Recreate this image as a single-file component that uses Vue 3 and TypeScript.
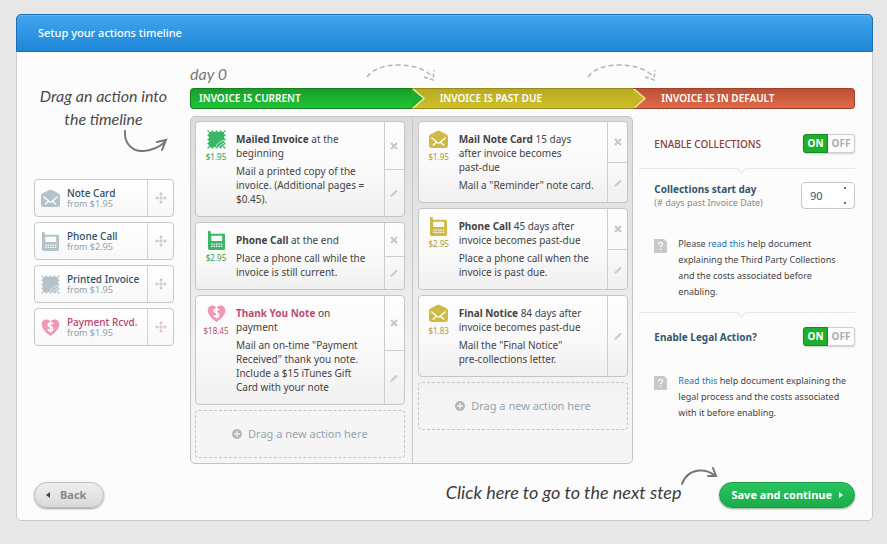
<script setup lang="ts">
import { ref } from 'vue'

type Tone = 'green' | 'gold' | 'pink' | 'slate'

interface PaletteItem {
  icon: string
  title: string
  price: string
  tone: Tone
}

interface TimelineCard {
  icon: string
  tone: Tone
  price: string
  name: string
  when: string
  text: string
  removable: boolean
}

const palette: PaletteItem[] = [
  { icon: 'mail', title: 'Note Card', price: 'from $1.95', tone: 'slate' },
  { icon: 'phone', title: 'Phone Call', price: 'from $2.95', tone: 'slate' },
  { icon: 'stamp', title: 'Printed Invoice', price: 'from $1.95', tone: 'slate' },
  { icon: 'heart', title: 'Payment Rcvd.', price: 'from $1.95', tone: 'pink' },
]

const columns: TimelineCard[][] = [
  [
    { icon: 'stamp', tone: 'green', price: '$1.95', name: 'Mailed Invoice', when: ' at the\nbeginning', text: 'Mail a printed copy of the\ninvoice. (Additional pages =\n$0.45).', removable: true },
    { icon: 'phone', tone: 'green', price: '$2.95', name: 'Phone Call', when: ' at the end', text: 'Place a phone call while the\ninvoice is still current.', removable: true },
    { icon: 'heart', tone: 'pink', price: '$18.45', name: 'Thank You Note', when: ' on\npayment', text: 'Mail an on-time "Payment\nReceived" thank you note.\nInclude a $15 iTunes Gift\nCard with your note', removable: true },
  ],
  [
    { icon: 'mail', tone: 'gold', price: '$1.95', name: 'Mail Note Card', when: ' 15 days\nafter invoice becomes\npast-due', text: 'Mail a "Reminder" note card.', removable: true },
    { icon: 'phone', tone: 'gold', price: '$2.95', name: 'Phone Call', when: ' 45 days after\ninvoice becomes past-due', text: 'Place a phone call when the\ninvoice is past due.', removable: true },
    { icon: 'mail', tone: 'gold', price: '$1.83', name: 'Final Notice', when: ' 84 days after\ninvoice becomes past-due', text: 'Mail the "Final Notice"\npre-collections letter.', removable: false },
  ],
]

const collections = ref(true)
const legal = ref(true)
const startDay = ref(90)
</script>

<template>
  <svg class="sprite" aria-hidden="true">
    <symbol id="mail" viewBox="0 0 20 20">
      <path fill="currentColor" d="M8.600 1a3 3 0 0 1 2.800 0l6.800 3.500A3 3 0 0 1 20 7v9.400a2.600 2.600 0 0 1-2.600 2.600H2.600A2.600 2.600 0 0 1 0 16.400V7a3 3 0 0 1 1.800-2.500z" />
      <path fill="none" stroke="#fff" stroke-width="1.400" d="M2.500 8l6 5.200q1.500 1.300 3 0l6-5.200M4 16.300l4.300-3.600M16 16.300l-4.300-3.600" />
    </symbol>
    <symbol id="phone" viewBox="0 0 20 20">
      <path fill="currentColor" fill-rule="evenodd" d="M1.500 0h1.600q.9 0 .9.900V3h13.500q1.500 0 1.500 1.500v14q0 1.500-1.500 1.500h-15Q1 20 1 18.500V.5q0-.5.500-.5zM4.500 5.500v4.500q0 .5.500.5h10.500q.5 0 .5-.5V5.500q0-.5-.5-.5H5q-.5 0-.5.500z" />
      <path stroke="#fff" stroke-width="1.300" stroke-dasharray="1.500 1" d="M4.500 13.700h11.500M4.500 16.200h11.500" />
    </symbol>
    <symbol id="stamp" viewBox="0 0 20 20">
      <path fill="currentColor" d="M.5.500h1.400a1.500 1.600 0 0 0 3 0h1.400a1.500 1.600 0 0 0 3 0h1.400a1.500 1.600 0 0 0 3 0h1.400a1.500 1.600 0 0 0 3 0h1.400v1.400a1.600 1.500 0 0 0 0 3v1.400a1.600 1.500 0 0 0 0 3v1.400a1.600 1.500 0 0 0 0 3v1.400a1.600 1.500 0 0 0 0 3v1.400h-1.400a1.500 1.600 0 0 0-3 0h-1.400a1.500 1.600 0 0 0-3 0H9.300a1.500 1.600 0 0 0-3 0H4.900a1.500 1.600 0 0 0-3 0H.5v-1.400a1.600 1.500 0 0 0 0-3v-1.400a1.600 1.500 0 0 0 0-3V9.300a1.600 1.500 0 0 0 0-3V4.900a1.600 1.500 0 0 0 0-3z" />
      <path fill="none" stroke="#fff" stroke-opacity=".75" stroke-width="1" d="M9 18.500q2-6 9-7.500M12 18.500q1.500-3.500 6-4.600M15 18.500q1-1.500 3-2.200" />
    </symbol>
    <symbol id="heart" viewBox="0 0 20 20">
      <path fill="currentColor" d="M10 19Q.7 12.500.7 6.800C.7 3.500 3 1.500 5.700 1.500q2.800 0 4.300 2.300 1.500-2.300 4.300-2.300c2.700 0 5 2 5 5.300Q19.300 12.500 10 19z" />
      <path fill="none" stroke="#fff" stroke-width="1.600" d="M12.800 6.300q-1-1.100-2.800-1.100-2.500 0-2.500 1.900 0 1.600 2.500 2.200t2.500 2.200q0 1.900-2.500 1.900-1.900 0-2.900-1.200M10 3.500v11.700" />
    </symbol>
    <symbol id="grip" viewBox="0 0 12 12">
      <path fill="none" stroke="currentColor" d="M6 1.500v9M1.500 6h9" />
      <path fill="currentColor" d="M6 0l2 2.500H4zM6 12l2-2.500H4zM0 6l2.500-2v4zM12 6L9.500 4v4z" />
    </symbol>
  </svg>

  <main class="panel">
    <header class="head"><h1>Setup your actions timeline</h1></header>
    <div class="body">
      <aside class="tools">
        <p class="hand intro">Drag an action into<br />the timeline</p>
        <svg class="swoop" viewBox="0 0 44 26" width="44" height="26" aria-hidden="true">
          <path d="M1 2C0 14 8 23 20 22Q32 21 41 13M33 13l9-2-4 10" />
        </svg>
        <ul class="palette">
          <li v-for="item in palette" :key="item.title" :class="['chip', item.tone]">
            <svg class="glyph"><use :href="'#' + item.icon" /></svg>
            <div class="chip-text">
              <strong>{{ item.title }}</strong>
              <span>{{ item.price }}</span>
            </div>
            <button class="grip" type="button" :aria-label="'Drag ' + item.title">
              <svg width="12" height="12"><use href="#grip" /></svg>
            </button>
          </li>
        </ul>
      </aside>

      <section class="timeline">
        <div class="marks">
          <p class="hand day">day 0</p>
          <svg v-for="n in 2" :key="n" class="hop" :class="'hop' + n" viewBox="0 0 70 18" width="70" height="18" aria-hidden="true">
            <path stroke-dasharray="5 3" d="M1 13Q10 1 33 1 54 1 66 12" />
            <path stroke-dasharray="4 2" d="M58 13l9 3 1-10" />
          </svg>
        </div>
        <div class="stages">
          <h2 class="stage green">INVOICE IS CURRENT
            <svg class="chev" viewBox="0 0 14 19" width="14" height="19" aria-hidden="true"><path fill="#1cb02c" stroke="#eef0b0" stroke-width="1.400" d="M0 -1L12 9.500L0 20" /></svg>
          </h2>
          <h2 class="stage gold">INVOICE IS PAST DUE
            <svg class="chev" viewBox="0 0 14 19" width="14" height="19" aria-hidden="true"><path fill="#c3b524" stroke="#f6e6a4" stroke-width="1.400" d="M0 -1L12 9.500L0 20" /></svg>
          </h2>
          <h2 class="stage red">INVOICE IS IN DEFAULT</h2>
        </div>

        <div class="board">
          <div v-for="(cards, c) in columns" :key="c" class="lane">
            <article v-for="card in cards" :key="card.name" :class="['card', card.tone]">
              <div class="badge">
                <svg class="glyph"><use :href="'#' + card.icon" /></svg>
                <span>{{ card.price }}</span>
              </div>
              <div class="copy">
                <p><b>{{ card.name }}</b>{{ card.when }}</p>
                <p>{{ card.text }}</p>
              </div>
              <div class="acts">
                <button v-if="card.removable" type="button" :aria-label="'Remove ' + card.name">
                  <svg width="8" height="8" viewBox="0 0 8 8"><path stroke="#c3cbd0" stroke-width="2.200" d="M1 1l6 6M7 1L1 7" /></svg>
                </button>
                <button type="button" :aria-label="'Edit ' + card.name">
                  <svg width="8" height="8" viewBox="0 0 8 8"><path stroke="#c9c9c9" stroke-width="2.200" d="M2 6.200L7 1.500" /><path fill="#c9c9c9" d="M0 8l1-2.800L2.800 7z" /></svg>
                </button>
              </div>
            </article>
            <div class="drop">
              <svg width="10" height="10" viewBox="0 0 10 10"><circle cx="5" cy="5" r="5" fill="#b0b6ba" /><path stroke="#eee" stroke-width="1.400" d="M5 2v6M2 5h6" /></svg>
              Drag a new action here
            </div>
          </div>
        </div>

        <div class="settings">
          <div class="row first">
            <label class="caps" for="collections">ENABLE COLLECTIONS</label>
            <label class="switch">
              <input id="collections" v-model="collections" type="checkbox" />
              <span class="on">ON</span><span class="off">OFF</span>
            </label>
          </div>
          <div class="rule"></div>
          <div class="row start">
            <label for="start-day"><strong>Collections start day</strong><small>(# days past Invoice Date)</small></label>
            <span class="stepper"><input id="start-day" v-model="startDay" type="number" /><i></i></span>
          </div>
          <div class="help">
            <svg width="13" height="14" viewBox="0 0 13 14"><path fill="#c8c8c8" d="M0 0h10l3 3v11H0z" /><path fill="none" stroke="#f4f4f4" stroke-width="1.400" d="M4.500 5.500q0-2 2-2t2 1.700q0 1-1 1.500t-1 1.500M6.500 9.500V11" /></svg>
            <p>Please <a href="#collections-help">read this</a> help document<br />explaining the Third Party Collections<br />and the costs associated before<br />enabling.</p>
          </div>
          <div class="rule"></div>
          <div class="row legal">
            <label for="legal"><strong>Enable Legal Action?</strong></label>
            <label class="switch">
              <input id="legal" v-model="legal" type="checkbox" />
              <span class="on">ON</span><span class="off">OFF</span>
            </label>
          </div>
          <div class="help">
            <svg width="13" height="14" viewBox="0 0 13 14"><path fill="#c8c8c8" d="M0 0h10l3 3v11H0z" /><path fill="none" stroke="#f4f4f4" stroke-width="1.400" d="M4.500 5.500q0-2 2-2t2 1.700q0 1-1 1.500t-1 1.500M6.500 9.500V11" /></svg>
            <p><a href="#legal-help">Read this</a> help document explaining the<br />legal process and the costs associated<br />with it before enabling.</p>
          </div>
        </div>
      </section>
    </div>

    <footer class="foot">
      <button class="pill back" type="button">
        <svg width="4" height="6" viewBox="0 0 4 6"><path fill="#444" d="M4 0v6L0 3z" /></svg>Back
      </button>
      <div class="next">
        <p class="hand">Click here to go to the next step</p>
        <svg class="swoop" viewBox="0 0 38 20" width="38" height="20" aria-hidden="true">
          <path d="M1 17Q5 5 18 3.500 27 3 33 8M27 9l8 0-3-8" />
        </svg>
        <button class="pill save" type="button">
          Save and continue<svg width="4" height="6" viewBox="0 0 4 6"><path fill="#fff" d="M0 0v6l4-3z" /></svg>
        </button>
      </div>
    </footer>
  </main>
</template>

<style>
body {
  background-color: #e8e8e8;
  background-image: radial-gradient(#e5e5e5 1px, transparent 1px);
  background-size: 4px 4px;
}
</style>

<style scoped>
* {
  box-sizing: border-box;
}
h1,
h2,
p,
ul {
  margin: 0;
  padding: 0;
}
button,
input {
  font: inherit;
}
button {
  padding: 0;
  border: 0;
  background: none;
  cursor: pointer;
}
svg {
  display: block;
  flex: none;
}
.sprite {
  position: absolute;
  width: 0;
  height: 0;
}
.panel {
  margin: 14px 14px 23px 16px;
  border: 1px solid #cbcbcb;
  border-radius: 5px;
  background: #fcfcfc;
  color: #444;
  font: 10px/14px "Lucida Grande", "Noto Sans", sans-serif;
}
.head {
  margin: -1px -1px 0;
  padding: 11px 21px;
  border: 1px solid #1b6fb3;
  border-radius: 5px 5px 0 0;
  background: linear-gradient(#42a5f0, #1e87d6);
  box-shadow: inset 0 1px #5eb6f5;
}
h1 {
  color: #fff;
  font-size: 11px;
  font-weight: 500;
  line-height: 14px;
}
.body {
  display: grid;
  grid-template-columns: 139px 1fr;
  gap: 17px;
  padding: 0 17px;
}
.hand {
  color: #4a4a4a;
  font: italic 16px/23px "Segoe Print", Lato, sans-serif;
}
.swoop path {
  fill: none;
  stroke: #777;
  stroke-width: 2;
  stroke-linecap: round;
}
.intro {
  padding-top: 32px;
  text-align: center;
}
.tools .swoop {
  margin: -1px 0 0 90px;
}
.palette {
  display: grid;
  gap: 5px;
  margin-top: 24px;
  list-style: none;
}
.chip {
  display: grid;
  grid-template-columns: 18px 1fr 26px;
  column-gap: 8px;
  align-items: center;
  height: 38px;
  padding-left: 6px;
  border: 1px solid #c8c8c8;
  border-radius: 4px;
  background: linear-gradient(#fff, #f8f8f8);
}
.glyph {
  width: 19px;
  height: 19px;
}
.chip-text {
  display: grid;
  white-space: nowrap;
}
.chip-text strong {
  color: #2f4f66;
  font-weight: 500;
  line-height: 12px;
}
.chip-text span {
  color: #8ea1ad;
  font-size: 9px;
  line-height: 10px;
}
.chip.pink strong {
  color: #b8446c;
}
.slate {
  color: #b4c2ca;
}
.pink {
  color: #ef97b7;
}
.green {
  color: #3bb567;
}
.gold {
  color: #cdbb45;
}
.grip {
  display: grid;
  place-items: center;
  height: 100%;
  border-left: 1px solid #d2d2d2;
  color: #c2c6c9;
}
.pink .grip {
  color: #e3bccb;
}
.timeline {
  display: grid;
  grid-template-columns: repeat(3, 1fr);
}
.marks {
  position: relative;
  grid-column: 1 / -1;
  height: 36px;
}
.day {
  padding-top: 10px;
  color: #777;
}
.hop {
  position: absolute;
  top: 12px;
  fill: none;
  stroke: #b4b4b4;
  stroke-width: 1.500;
}
.hop1 {
  right: calc(66.67% - 24px);
}
.hop2 {
  right: calc(33.33% - 24px);
}
.stages {
  display: grid;
  grid-column: 1 / -1;
  grid-template-columns: repeat(3, 1fr);
}
.stage {
  position: relative;
  padding: 0 0 0 28px;
  border: solid;
  border-width: 1px 0;
  color: #fff;
  font-size: 10px;
  font-weight: 600;
  line-height: 19px;
}
.stage.green {
  z-index: 2;
  padding-left: 8px;
  border-left-width: 1px;
  border-color: #12801f;
  border-radius: 4px 0 0 4px;
  background: linear-gradient(#15a026, #22c337);
}
.stage.gold {
  z-index: 1;
  border-color: #958b1c;
  background: linear-gradient(#b8a920, #cfc12a);
}
.stage.red {
  border-right-width: 1px;
  border-color: #a0402c;
  border-radius: 0 4px 4px 0;
  background: linear-gradient(#bb5034, #e06b4b);
}
.chev {
  position: absolute;
  top: 0;
  right: -14px;
}
.board {
  display: grid;
  grid-column: span 2;
  grid-template-columns: 1fr 1fr;
  margin-top: 7px;
  border: 1px solid #c4c4c4;
  border-radius: 5px;
  background: linear-gradient(#dcdcdc, #f5f5f5 85%);
}
.lane {
  display: flex;
  flex-direction: column;
  gap: 5px;
  padding: 4px 7px 5px 4px;
}
.lane + .lane {
  padding: 4px 4px 5px 5px;
  border-left: 1px solid #c8c8c8;
}
.card {
  display: grid;
  grid-template-columns: 40px 1fr 20px;
  border: 1px solid #c6c6c6;
  border-radius: 4px;
  background: linear-gradient(#fdfdfd, #fafafa 50%, #f0f0f0);
}
.badge {
  display: flex;
  flex-direction: column;
  align-items: center;
  padding-top: 8px;
  font-size: 8px;
}
.badge span {
  line-height: 16px;
}
.card.green .badge span {
  color: #2f9a45;
}
.card.gold .badge span {
  color: #a99b2c;
}
.card.pink .badge span,
.card.pink b {
  color: #c04a75;
}
.copy {
  display: grid;
  gap: 4px;
  padding: 10px 0;
  color: #444;
  white-space: pre;
}
.acts {
  display: grid;
  grid-auto-rows: 1fr;
  border-left: 1px solid #cdcdcd;
}
.acts button {
  display: grid;
  place-items: center;
}
.acts button + button {
  border-top: 1px solid #cdcdcd;
}
.drop {
  display: flex;
  align-items: center;
  justify-content: center;
  gap: 6px;
  height: 48px;
  border: 1px dashed #c4c4c4;
  border-radius: 4px;
  color: #96a4ae;
  font-size: 11px;
}
.settings {
  margin: 7px 0 0 6px;
}
.row {
  display: flex;
  align-items: center;
  justify-content: space-between;
  padding-left: 15px;
}
.row strong {
  color: #34556b;
}
.first {
  padding-top: 18px;
  padding-bottom: 15px;
}
.caps {
  color: #8d3b2c;
  font-weight: 500;
}
.switch {
  position: relative;
  display: flex;
  height: 19px;
  border: 1px solid #cfcfcf;
  border-radius: 3px;
  background: #fcfcfc;
  box-shadow: 0 1px 2px #ccc;
  font-weight: 700;
  line-height: 19px;
  text-align: center;
}
.switch input {
  position: absolute;
  inset: 0;
  margin: 0;
  opacity: 0;
}
.on {
  width: 25px;
  margin: -1px 0 -1px -1px;
  border: 1px solid #158a22;
  border-radius: 3px 0 0 3px;
  background: #1fae2d;
  color: #fff;
  line-height: 17px;
}
.off {
  width: 26px;
  color: #a9b1b8;
  line-height: 17px;
}
.rule {
  position: relative;
  border-top: 1px solid #e6e6e6;
}
.rule::after {
  position: absolute;
  top: -4px;
  left: 99px;
  width: 6px;
  height: 6px;
  border: solid #e6e6e6;
  border-width: 0 1px 1px 0;
  background: #fcfcfc;
  content: "";
  transform: rotate(45deg);
}
.start {
  padding-top: 13px;
}
.start label {
  display: grid;
}
small {
  color: #888;
  font-size: 9px;
  line-height: 13px;
}
.stepper {
  position: relative;
  display: block;
}
.stepper input {
  display: block;
  width: 54px;
  height: 27px;
  padding: 0 0 0 8px;
  border: 1px solid #c6c6c6;
  border-radius: 4px;
  background: #fff;
  color: #34556b;
  font-size: 11px;
  appearance: textfield;
}
.stepper input::-webkit-inner-spin-button {
  display: none;
}
.stepper i {
  position: absolute;
  top: 5px;
  right: 9px;
  width: 2px;
  height: 17px;
  border: solid #56707f;
  border-width: 2px 0;
}
.help {
  display: flex;
  gap: 11px;
  padding: 27px 0 12px 15px;
}
.help p {
  font-size: 9px;
  line-height: 16px;
  white-space: nowrap;
}
.help svg {
  margin-top: 3px;
}
a {
  color: #2073c4;
  text-decoration: none;
}
.legal {
  padding-top: 14px;
}
.foot {
  display: flex;
  align-items: center;
  justify-content: space-between;
  padding: 18px 17px 12px;
}
.next {
  display: flex;
  align-items: flex-start;
}
.next .hand {
  color: #3c3c3c;
  font-size: 18px;
  line-height: 20px;
}
.next .swoop {
  margin: -15px 0 0;
}
.pill {
  display: flex;
  align-items: center;
  height: 26px;
  border-radius: 13px;
  font-weight: 700;
}
.back {
  gap: 10px;
  padding: 0 17px 0 11px;
  border: 1px solid #bdbdbd;
  background: linear-gradient(#efefef, #d9d9d9);
  box-shadow: 0 1px 2px #999;
  color: #888;
  font-size: 11px;
}
.save {
  gap: 7px;
  padding: 0 11px;
  border: 1px solid #1c9a48;
  background: linear-gradient(#27c560, #1cab4b);
  box-shadow: 0 1px 2px #8a8;
  color: #fff;
  font-size: 11px;
}
</style>
